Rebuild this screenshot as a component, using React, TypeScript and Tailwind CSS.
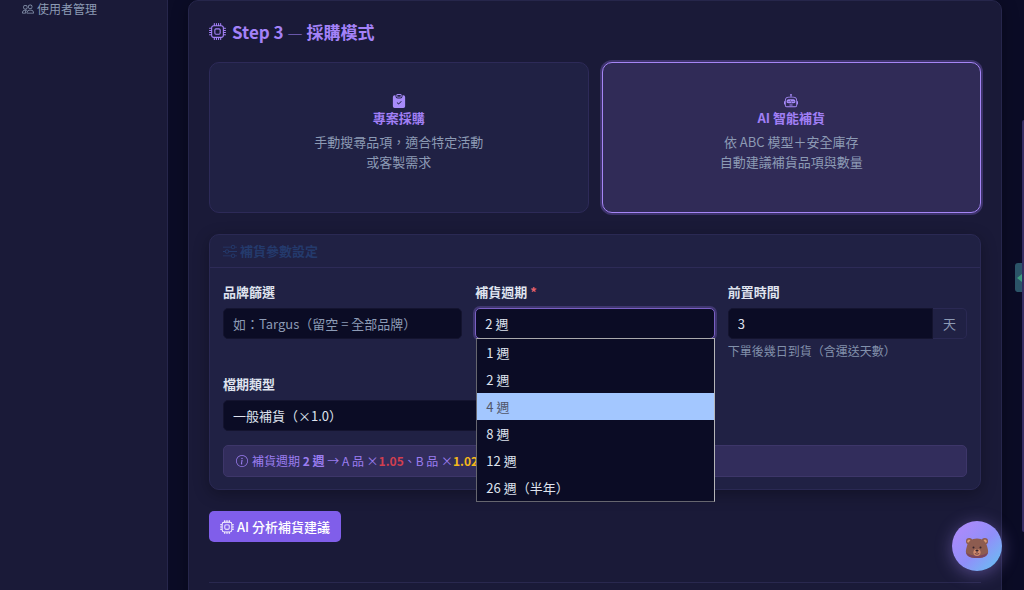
import React, { useState } from "react";
import {
  BsClipboardCheckFill,
  BsCpu,
  BsInfoCircle,
  BsPeople,
  BsRobot,
  BsSliders,
} from "react-icons/bs";

const weeks = ["1 週", "2 週", "4 週", "8 週", "12 週", "26 週（半年）"];

type ModeProps = {
  icon: React.ReactNode;
  title: string;
  lines: string[];
  active: boolean;
  onClick: () => void;
};

function ModeCard({ icon, title, lines, active, onClick }: ModeProps) {
  return (
    <button
      type="button"
      aria-pressed={active}
      onClick={onClick}
      className={
        "flex flex-col items-center rounded-[10px] border pt-[30px] pb-10 text-[13px] " +
        (active
          ? "border-[#a585f5] bg-[#302b57] ring-2 ring-[#3d336c]"
          : "border-[#2d2a58] bg-[#202144]")
      }
    >
      <span className="flex h-[15px] items-center text-[#a78bfa]">{icon}</span>
      <span className="mb-1 leading-5 font-semibold text-[#a07ff5]">{title}</span>
      {lines.map((line) => (
        <span key={line} className="leading-5 text-[#8c9ab4]">
          {line}
        </span>
      ))}
    </button>
  );
}

function Bear() {
  return (
    <svg viewBox="0 0 24 22" className="h-[22px] w-6" aria-hidden="true">
      <circle cx="4.2" cy="4.2" r="3.2" fill="#8d5c50" />
      <circle cx="19.8" cy="4.2" r="3.2" fill="#8d5c50" />
      <circle cx="4" cy="4.2" r="1.7" fill="#d99a72" />
      <circle cx="20" cy="4.2" r="1.7" fill="#d99a72" />
      <path
        d="M12 1.5c5.5 0 9 3 10 7.5 .9 3 1.6 5.5 .8 7.5C21.5 20 17 21 12 21S2.5 20 1.2 16.5C.4 14.5 1.1 12 2 9 3 4.5 6.500 1.500 12 1.500z"
        fill="#8d5c50"
      />
      <path
        d="M1.2 15.5C2 20 7 21 12 21s10-1 10.8-5.5C20 18 16 18.500 12 18.500S4 18 1.200 15.500z"
        fill="#7a4560"
      />
      <ellipse cx="12" cy="15.5" rx="3.6" ry="3.4" fill="#d08b6c" />
      <circle cx="8.5" cy="10.5" r="1" fill="#35232c" />
      <circle cx="15.5" cy="10.5" r="1" fill="#35232c" />
      <ellipse cx="12" cy="13.5" rx="1.6" ry="1.1" fill="#35232c" />
      <path d="M12 14.5v1.5M9.8 16.5q2.2 1.5 4.4 0" fill="none" stroke="#55303a" strokeWidth=".8" />
    </svg>
  );
}

function Params() {
  const [week, setWeek] = useState("2 週");
  const label = "mb-2 block leading-4 font-semibold text-[#dfe3ee]";
  const field =
    "block h-[31px] w-full appearance-none rounded-[5px] border border-[#14142f] bg-[#0b0c25] px-[9px] text-[13px] text-[#dfe3ee] outline-none";

  return (
    <section className="mt-[21px] rounded-[10px] border border-[#2a2953] bg-[#202144] text-[13px] shadow-[0_4px_16px_rgba(0,0,0,0.3)]">
      <h2 className="flex h-[33px] items-center gap-[3px] border-b border-[#2d2b57] px-[13px] font-semibold text-[#243a6c]">
        <BsSliders className="size-[14px]" />
        補貨參數設定
      </h2>
      <div className="px-[13px] pt-4 pb-3">
        <div className="grid grid-cols-6 gap-x-[13px] gap-y-[17px]">
          <div className="col-span-2">
            <label htmlFor="brand" className={label}>品牌篩選</label>
            <input
              id="brand"
              placeholder="如：Targus（留空 = 全部品牌）"
              className={field + " placeholder:text-[#8c9ab4]"}
            />
          </div>
          <div className="relative col-span-2">
            <label htmlFor="cycle" className={label}>
              補貨週期 <span className="text-[#e8606a]">*</span>
            </label>
            <select
              id="cycle"
              value={week}
              onChange={(e) => setWeek(e.target.value)}
              className="block h-[31px] w-full appearance-none rounded-[5px] border border-[#7a60c4] bg-[#0b0c25] px-[9px] text-[13px] text-[#dfe3ee] ring-2 ring-[#3f3670] outline-none"
            >
              {weeks.map((w) => (
                <option key={w}>{w}</option>
              ))}
            </select>
            <ul className="absolute top-[54px] right-0 left-0 z-10 ml-px border border-t-[#a9a9ac] border-r-[#b5b5b8] border-b-[#66666f] border-l-[#66666f] bg-[#0b0c25] text-[#dfe3ee]">
              {weeks.map((w) => (
                <li
                  key={w}
                  onClick={() => setWeek(w)}
                  className={
                    "px-[9px] leading-[27px] " +
                    (w === "4 週" ? "bg-[#a3c7ff] text-[#51566a]" : "")
                  }
                >
                  {w}
                </li>
              ))}
            </ul>
          </div>
          <div className="col-span-2">
            <label htmlFor="lead" className={label}>前置時間</label>
            <div className="flex h-[31px]">
              <input
                id="lead"
                defaultValue="3"
                className="min-w-0 flex-1 rounded-l-[5px] border border-[#14142f] bg-[#0b0c25] px-[9px] text-[#dfe3ee] outline-none"
              />
              <span className="flex w-[34px] items-center justify-center rounded-r-[5px] border border-l-0 border-[#2a2953] text-[#8c9ab4]">
                天
              </span>
            </div>
            <p className="mt-1 text-xs leading-4 text-[#8290ab]">下單後幾日到貨（含運送天數）</p>
          </div>
          <div className="col-span-3">
            <label htmlFor="season" className={label}>檔期類型</label>
            <select id="season" className={field}>
              <option>一般補貨（×1.0）</option>
            </select>
          </div>
        </div>
        <div className="mt-[14px] flex h-8 items-center overflow-hidden rounded-[5px] border border-[#3d3669] bg-[#322d5c] px-3 text-xs whitespace-nowrap text-[#9b7df0]">
          <BsInfoCircle className="mr-1 size-3 shrink-0" />
          <p>
            補貨週期 <strong>2 週</strong> → A 品 ×<strong className="text-[#d23f4f]">1.05</strong>、B 品 ×
            <strong className="text-[#f5b81a]">1.02</strong>
          </p>
        </div>
      </div>
    </section>
  );
}

function App() {
  const [mode, setMode] = useState("ai");

  return (
    <div className="relative flex h-screen overflow-hidden bg-[#0b0c26] font-['Noto_Sans_CJK_TC',sans-serif]">
      <nav className="w-[168px] shrink-0 border-r border-[#26264b] bg-[#1a1a38] pl-[22px]">
        <a href="#users" className="flex items-center gap-[3px] text-xs leading-[18px] text-[#8c9ab4]">
          <BsPeople className="size-3" />
          使用者管理
        </a>
      </nav>

      <main className="min-w-0 flex-1 px-5">
        <div className="min-h-[120vh] rounded-[10px] border border-[#26264b] bg-[#1a1a38] p-5 shadow-[0_4px_16px_rgba(0,0,0,0.35)]">
          <h1 className="mb-5 flex items-center gap-[6px] text-[17px] leading-[21px] font-semibold text-[#a482f8]">
            <BsCpu className="size-[17px]" />
            <span>
              Step 3 <span className="font-light text-[#7c66c0]">—</span> 採購模式
            </span>
          </h1>
          <div className="grid grid-cols-2 gap-[13px]">
            <ModeCard
              icon={<BsClipboardCheckFill className="size-[14px]" />}
              title="專案採購"
              lines={["手動搜尋品項，適合特定活動", "或客製需求"]}
              active={mode === "project"}
              onClick={() => setMode("project")}
            />
            <ModeCard
              icon={<BsRobot className="size-[14px]" />}
              title="AI 智能補貨"
              lines={["依 ABC 模型＋安全庫存", "自動建議補貨品項與數量"]}
              active={mode === "ai"}
              onClick={() => setMode("ai")}
            />
          </div>
          <Params />
          <button
            type="button"
            className="mt-[21px] flex h-[31px] items-center gap-[3px] rounded-[5px] bg-[#805eea] px-[11px] text-[13px] font-medium text-white"
          >
            <BsCpu className="size-[14px]" />
            AI 分析補貨建議
          </button>
          <hr className="mt-10 border-[#29284f]" />
        </div>
      </main>

      {/* scroll bar */}
      <div className="w-[2px] shrink-0 pt-[120px]">
        <div className="h-[412px] rounded-l-sm bg-[#352d62]" />
      </div>

      <button
        type="button"
        aria-label="展開側欄"
        className="absolute top-[263px] right-[2px] flex h-[29px] w-[7px] items-center justify-end rounded-l-[3px] bg-[#2b5468]"
      >
        <svg viewBox="0 0 5 8" className="h-2 w-[5px]" aria-hidden="true">
          <path d="M5 0v8L0 4z" fill="#3f9d80" />
        </svg>
      </button>
      <button
        type="button"
        aria-label="小熊助理"
        className="absolute right-[22px] bottom-[19px] flex size-[50px] items-center justify-center rounded-full bg-linear-135 from-[#a78bfa] from-20% via-[#8f8ff9] via-55% to-[#56c5f0] pt-1 shadow-[0_3px_17px_rgba(167,139,250,0.4)]"
      >
        <Bear />
      </button>
    </div>
  );
}

export default App;
